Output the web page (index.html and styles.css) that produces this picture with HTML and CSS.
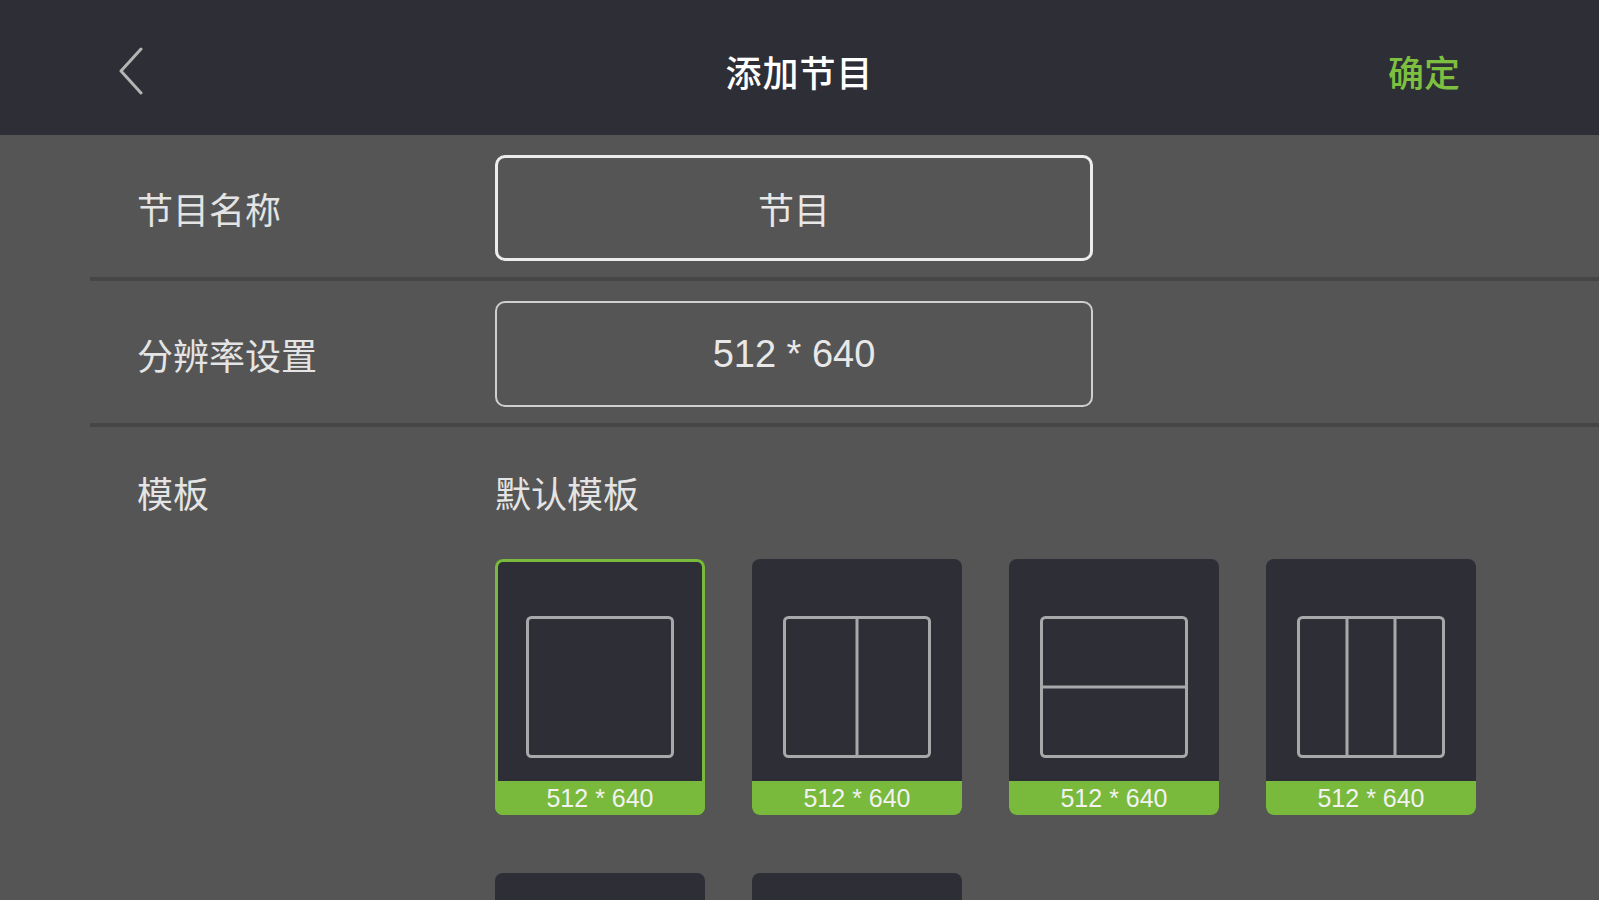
FILE: index.html
```html
<!DOCTYPE html>
<html lang="zh-CN">
<head>
    <meta charset="UTF-8">
    <meta name="viewport" content="width=device-width, initial-scale=1.0">
    <title>添加节目</title>
    <link rel="stylesheet" href="styles.css">
</head>
<body>
    <header class="topbar">
        <button class="back-button" aria-label="返回">
            <svg width="26" height="48" viewBox="0 0 26 48">
                <polyline points="23,2 3,24 23,46" fill="none" stroke="#b4b4b4" stroke-width="3" stroke-linecap="round" stroke-linejoin="round"/>
            </svg>
        </button>
        <h1 class="title">添加节目</h1>
        <button class="confirm-button">确定</button>
    </header>

    <main class="form">
        <div class="form-row">
            <div class="row-label">节目名称</div>
            <div class="field field-active">节目</div>
        </div>
        <div class="form-row">
            <div class="row-label">分辨率设置</div>
            <div class="field field-number">512 * 640</div>
        </div>
        <div class="form-row template-row">
            <div class="row-label">模板</div>
            <div class="template-body">
                <div class="template-title">默认模板</div>
                <div class="template-grid">
                    <div class="tile selected">
                        <div class="tile-preview">
                            <svg width="148" height="142" viewBox="0 0 148 142">
                                <rect x="1.5" y="1.5" width="145" height="139" rx="4" fill="none" stroke="#a8a8aa" stroke-width="3"/>
                            </svg>
                        </div>
                        <div class="tile-size">512 * 640</div>
                    </div>
                    <div class="tile">
                        <div class="tile-preview">
                            <svg width="148" height="142" viewBox="0 0 148 142">
                                <rect x="1.5" y="1.5" width="145" height="139" rx="4" fill="none" stroke="#a8a8aa" stroke-width="3"/>
                                <line x1="74" y1="1.5" x2="74" y2="140.5" stroke="#a8a8aa" stroke-width="3"/>
                            </svg>
                        </div>
                        <div class="tile-size">512 * 640</div>
                    </div>
                    <div class="tile">
                        <div class="tile-preview">
                            <svg width="148" height="142" viewBox="0 0 148 142">
                                <rect x="1.5" y="1.5" width="145" height="139" rx="4" fill="none" stroke="#a8a8aa" stroke-width="3"/>
                                <line x1="1.5" y1="71" x2="146.5" y2="71" stroke="#a8a8aa" stroke-width="3"/>
                            </svg>
                        </div>
                        <div class="tile-size">512 * 640</div>
                    </div>
                    <div class="tile">
                        <div class="tile-preview">
                            <svg width="148" height="142" viewBox="0 0 148 142">
                                <rect x="1.5" y="1.5" width="145" height="139" rx="4" fill="none" stroke="#a8a8aa" stroke-width="3"/>
                                <line x1="50" y1="1.5" x2="50" y2="140.5" stroke="#a8a8aa" stroke-width="3"/>
                                <line x1="98" y1="1.5" x2="98" y2="140.5" stroke="#a8a8aa" stroke-width="3"/>
                            </svg>
                        </div>
                        <div class="tile-size">512 * 640</div>
                    </div>
                    <div class="tile">
                        <div class="tile-preview">
                            <svg width="148" height="142" viewBox="0 0 148 142">
                                <rect x="1.5" y="1.5" width="145" height="139" rx="4" fill="none" stroke="#a8a8aa" stroke-width="3"/>
                                <line x1="74" y1="1.5" x2="74" y2="140.5" stroke="#a8a8aa" stroke-width="3"/>
                                <line x1="1.5" y1="71" x2="146.5" y2="71" stroke="#a8a8aa" stroke-width="3"/>
                            </svg>
                        </div>
                        <div class="tile-size">512 * 640</div>
                    </div>
                    <div class="tile">
                        <div class="tile-preview">
                            <svg width="148" height="142" viewBox="0 0 148 142">
                                <rect x="1.5" y="1.5" width="145" height="139" rx="4" fill="none" stroke="#a8a8aa" stroke-width="3"/>
                                <line x1="1.5" y1="71" x2="146.5" y2="71" stroke="#a8a8aa" stroke-width="3"/>
                                <line x1="74" y1="71" x2="74" y2="140.5" stroke="#a8a8aa" stroke-width="3"/>
                            </svg>
                        </div>
                        <div class="tile-size">512 * 640</div>
                    </div>
                </div>
            </div>
        </div>
    </main>
</body>
</html>
```

FILE: styles.css
```css
* { box-sizing: border-box; }
body { margin: 0; background: #555555; color: #e6e6e6; font-family: "Noto Sans CJK SC", "Noto Sans", sans-serif; }

.topbar { height: 135px; background: #2e2f36; display: grid; grid-template-columns: 1fr auto 1fr; align-items: center; padding: 6px 118px 0; }
.back-button { justify-self: start; background: none; border: none; padding: 0; cursor: pointer; display: flex; }
.title { margin: 0; font-size: 36px; font-weight: 500; color: #ffffff; letter-spacing: 1px; }
.confirm-button { justify-self: end; margin-right: 21px; background: none; border: none; padding: 0; font-family: inherit; font-size: 36px; font-weight: 500; color: #7dbf3f; cursor: pointer; }

.form-row { margin-left: 90px; display: flex; align-items: center; padding: 20px 0 16px; border-bottom: 4px solid #464646; }
.row-label { width: 405px; padding-left: 47px; font-size: 36px; line-height: 43px; color: #e4e4e4; flex-shrink: 0; }
.field { width: 598px; height: 106px; border: 2px solid #cfcfcf; border-radius: 10px; display: flex; align-items: center; justify-content: center; font-size: 36px; color: #e8e8e8; }
.field-active { border: 3px solid #ececec; }
.field-number { font-family: "Liberation Sans", "Noto Sans CJK SC", sans-serif; font-size: 38px; }

.template-row { align-items: flex-start; padding-top: 44px; border-bottom: none; }
.template-title { font-size: 36px; line-height: 43px; color: #e4e4e4; margin-bottom: 45px; }
.template-grid { display: grid; grid-template-columns: repeat(4, 210px); column-gap: 47px; row-gap: 58px; }

.tile { height: 256px; border-radius: 8px; background: #2e2f36; overflow: hidden; display: flex; flex-direction: column; }
.tile.selected { box-shadow: inset 0 0 0 3px #79b93c; }
.tile-preview { height: 222px; padding-top: 57px; display: flex; justify-content: center; }
.tile-size { height: 34px; background: #79b93c; color: #f2f2f2; font-family: "Liberation Sans", sans-serif; font-size: 25px; line-height: 34px; text-align: center; }
```
